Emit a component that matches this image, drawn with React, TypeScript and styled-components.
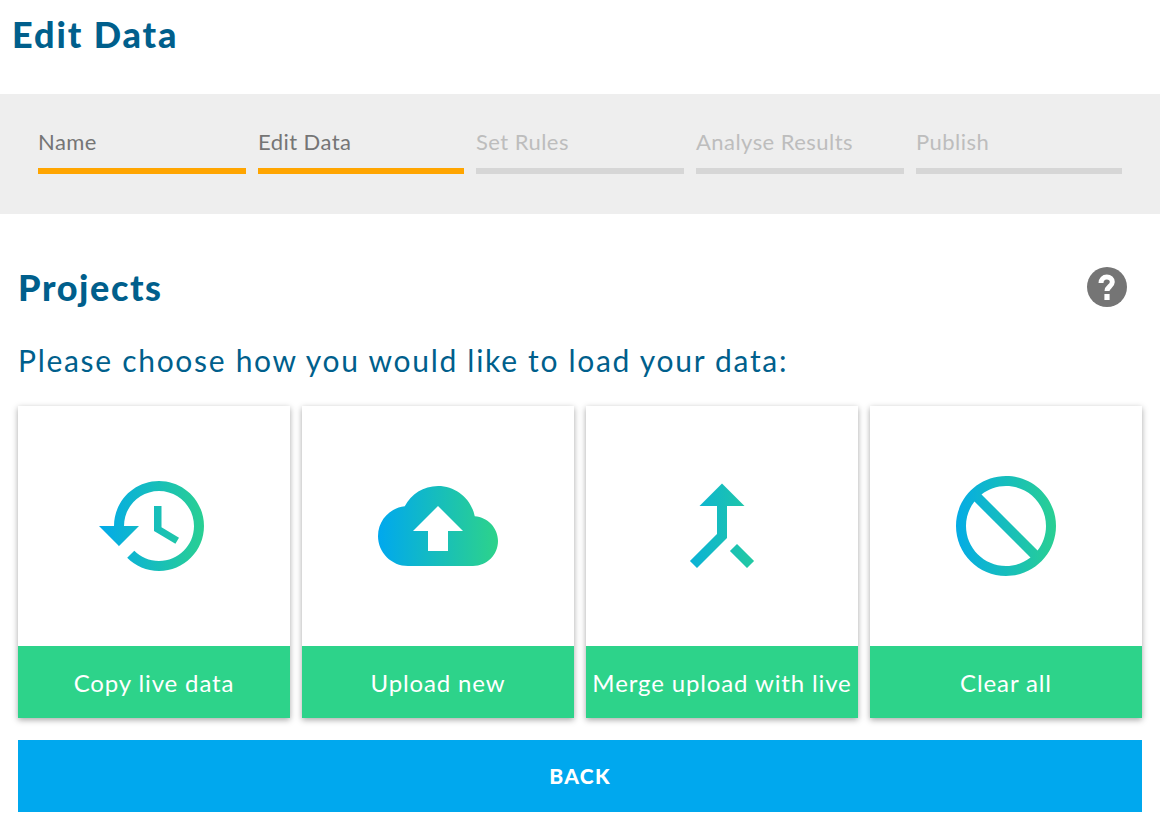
import React from 'react';
import styled, { createGlobalStyle } from 'styled-components';

const GlobalStyle = createGlobalStyle`
  html, body {
    margin: 0;
    padding: 0;
    background: #ffffff;
    font-family: Lato, "Liberation Sans", sans-serif;
  }
`;

const Page = styled.div`
  width: 1160px;
  height: 836px;
  overflow: hidden;
`;

const PageTitle = styled.h1`
  margin: 0;
  height: 94px;
  padding: 12px 0 0 12px;
  box-sizing: border-box;
  font-size: 36px;
  line-height: 44px;
  font-weight: 900;
  letter-spacing: 1.9px;
  color: #005f8c;
`;

const StepBand = styled.div`
  display: grid;
  grid-template-columns: 208px 206px 208px 208px 206px;
  column-gap: 12px;
  height: 120px;
  padding: 34px 38px 0;
  box-sizing: border-box;
  background: #eeeeee;
`;

const Step = styled.div<{ $done: boolean }>`
  height: 40px;
  border-bottom: 6px solid ${(p) => (p.$done ? '#ffa500' : '#d6d6d6')};
  font-size: 22px;
  line-height: 28px;
  letter-spacing: 0.45px;
  color: ${(p) => (p.$done ? '#757575' : '#bdbdbd')};
`;

const Content = styled.div`
  padding: 0 18px;
`;

const HeadingRow = styled.div`
  display: flex;
  justify-content: space-between;
  align-items: center;
  height: 126px;
  box-sizing: border-box;
  padding: 20px 15px 0 0;
`;

const Heading = styled.h2`
  margin: 0;
  font-size: 36px;
  font-weight: 900;
  letter-spacing: 1.6px;
  color: #005f8c;
`;

const HelpIcon = () => (
  <svg width="40" height="40" viewBox="0 0 40 40">
    <circle cx="20" cy="20" r="20" fill="#757575" />
    <path
      d="M14 16C14 12.5 16.5 10 19.8 10C23 10 25.3 12 25.3 15C25.3 19.5 20 19.5 20 24"
      fill="none"
      stroke="#ffffff"
      strokeWidth="5"
    />
    <rect x="17.4" y="27" width="5.2" height="6" fill="#ffffff" />
  </svg>
);

const HelpButton = styled.div`
  display: flex;
  margin-top: -1px;
`;

const Prompt = styled.p`
  margin: 0;
  font-size: 30px;
  line-height: 40px;
  letter-spacing: 1.7px;
  color: #005f8c;
`;

const CardGrid = styled.div`
  display: grid;
  grid-template-columns: repeat(4, 272px);
  column-gap: 12px;
  margin-top: 26px;
`;

const Card = styled.div`
  display: flex;
  flex-direction: column;
  height: 312px;
  background: #ffffff;
  box-shadow: 0 2px 6px rgba(0, 0, 0, 0.35);
`;

const CardIcon = styled.div`
  flex: 1;
  display: flex;
  align-items: center;
  justify-content: center;
`;

const CardLabel = styled.div`
  height: 72px;
  display: flex;
  align-items: center;
  justify-content: center;
  background: #2dd38a;
  color: #ffffff;
  font-size: 24px;
  letter-spacing: 0.87px;
  white-space: nowrap;
`;

const BackButton = styled.button`
  display: block;
  width: 100%;
  height: 72px;
  margin-top: 22px;
  padding: 0 0 2px;
  border: none;
  background: #00a8ee;
  color: #ffffff;
  font-family: inherit;
  font-size: 21px;
  font-weight: 900;
  letter-spacing: 1.3px;
`;

const steps = [
  { label: 'Name', done: true },
  { label: 'Edit Data', done: true },
  { label: 'Set Rules', done: false },
  { label: 'Analyse Results', done: false },
  { label: 'Publish', done: false },
];

const cards = [
  {
    id: 'history',
    label: 'Copy live data',
    d: 'M13 3c-4.97 0-9 4.03-9 9H1l3.89 3.89.07.14L9 12H6c0-3.87 3.13-7 7-7s7 3.13 7 7-3.13 7-7 7c-1.93 0-3.68-.79-4.94-2.06l-1.42 1.42C8.27 19.99 10.51 21 13 21c4.97 0 9-4.03 9-9s-4.03-9-9-9zm-1 5v5l4.28 2.54.72-1.21-3.5-2.08V8H12z',
  },
  {
    id: 'upload',
    label: 'Upload new',
    d: 'M19.35 10.04C18.67 6.59 15.64 4 12 4 9.11 4 6.6 5.64 5.35 8.04 2.34 8.36 0 10.91 0 14c0 3.31 2.69 6 6 6h13c2.76 0 5-2.24 5-5 0-2.64-2.05-4.78-4.65-4.96zM14 13v4h-4v-4H7l5-5 5 5h-3z',
  },
  {
    id: 'merge',
    label: 'Merge upload with live',
    d: 'M17 20.41L18.41 19 15 15.59 13.59 17 17 20.41zM7.5 8H11v5.59L5.59 19 7 20.41l6-6V8h3.5L12 3.5 7.5 8z',
  },
  {
    id: 'clear',
    label: 'Clear all',
    d: 'M12 2C17.52 2 22 6.48 22 12s-4.48 10-10 10S2 17.52 2 12 6.48 2 12 2zM20 12c0-4.42-3.58-8-8-8-1.85 0-3.55.63-4.9 1.69L18.31 16.9C19.37 15.55 20 13.85 20 12zm-8 8c1.85 0 3.55-.63 4.9-1.69L5.69 7.1C4.63 8.45 4 10.15 4 12c0 4.42 3.58 8 8 8z',
  },
];

const GradientIcon = ({ id, d }: { id: string; d: string }) => (
  <svg width="120" height="120" viewBox="0 0 24 24">
    <defs>
      <linearGradient id={id} gradientUnits="userSpaceOnUse" x1="0" y1="0" x2="24" y2="0">
        <stop offset="0" stopColor="#00a8ee" />
        <stop offset="1" stopColor="#2dd38a" />
      </linearGradient>
    </defs>
    <path d={d} fill={`url(#${id})`} fillRule="evenodd" />
  </svg>
);

const App = () => {
  return (
    <Page>
      <GlobalStyle />
      <PageTitle>Edit Data</PageTitle>
      <StepBand>
        {steps.map((s) => (
          <Step key={s.label} $done={s.done}>
            {s.label}
          </Step>
        ))}
      </StepBand>
      <Content>
        <HeadingRow>
          <Heading>Projects</Heading>
          <HelpButton>
            <HelpIcon />
          </HelpButton>
        </HeadingRow>
        <Prompt>Please choose how you would like to load your data:</Prompt>
        <CardGrid>
          {cards.map((c) => (
            <Card key={c.id}>
              <CardIcon>
                <GradientIcon id={c.id} d={c.d} />
              </CardIcon>
              <CardLabel>{c.label}</CardLabel>
            </Card>
          ))}
        </CardGrid>
        <BackButton>BACK</BackButton>
      </Content>
    </Page>
  );
};

export default App;
